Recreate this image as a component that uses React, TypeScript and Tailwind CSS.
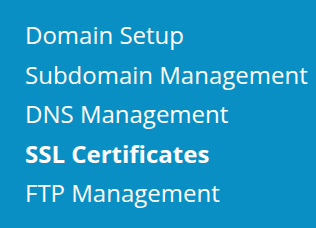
export default function App() {
  const items = [
    { label: "Domain Setup", bold: false },
    { label: "Subdomain Management", bold: false },
    { label: "DNS Management", bold: false },
    { label: "SSL Certificates", bold: true },
    { label: "FTP Management", bold: false },
  ];
  return (
    <div className="w-[316px] h-[228px] bg-[#0a8fc4] pt-[15px] pl-[25px] font-['Open_Sans',sans-serif] text-white">
      <ul className="flex flex-col">
        {items.map((it) => (
          <li
            key={it.label}
            className={`text-[24px] leading-[39.5px] whitespace-nowrap ${it.bold ? "font-bold" : "font-normal"}`}
          >
            {it.label}
          </li>
        ))}
      </ul>
    </div>
  );
}
